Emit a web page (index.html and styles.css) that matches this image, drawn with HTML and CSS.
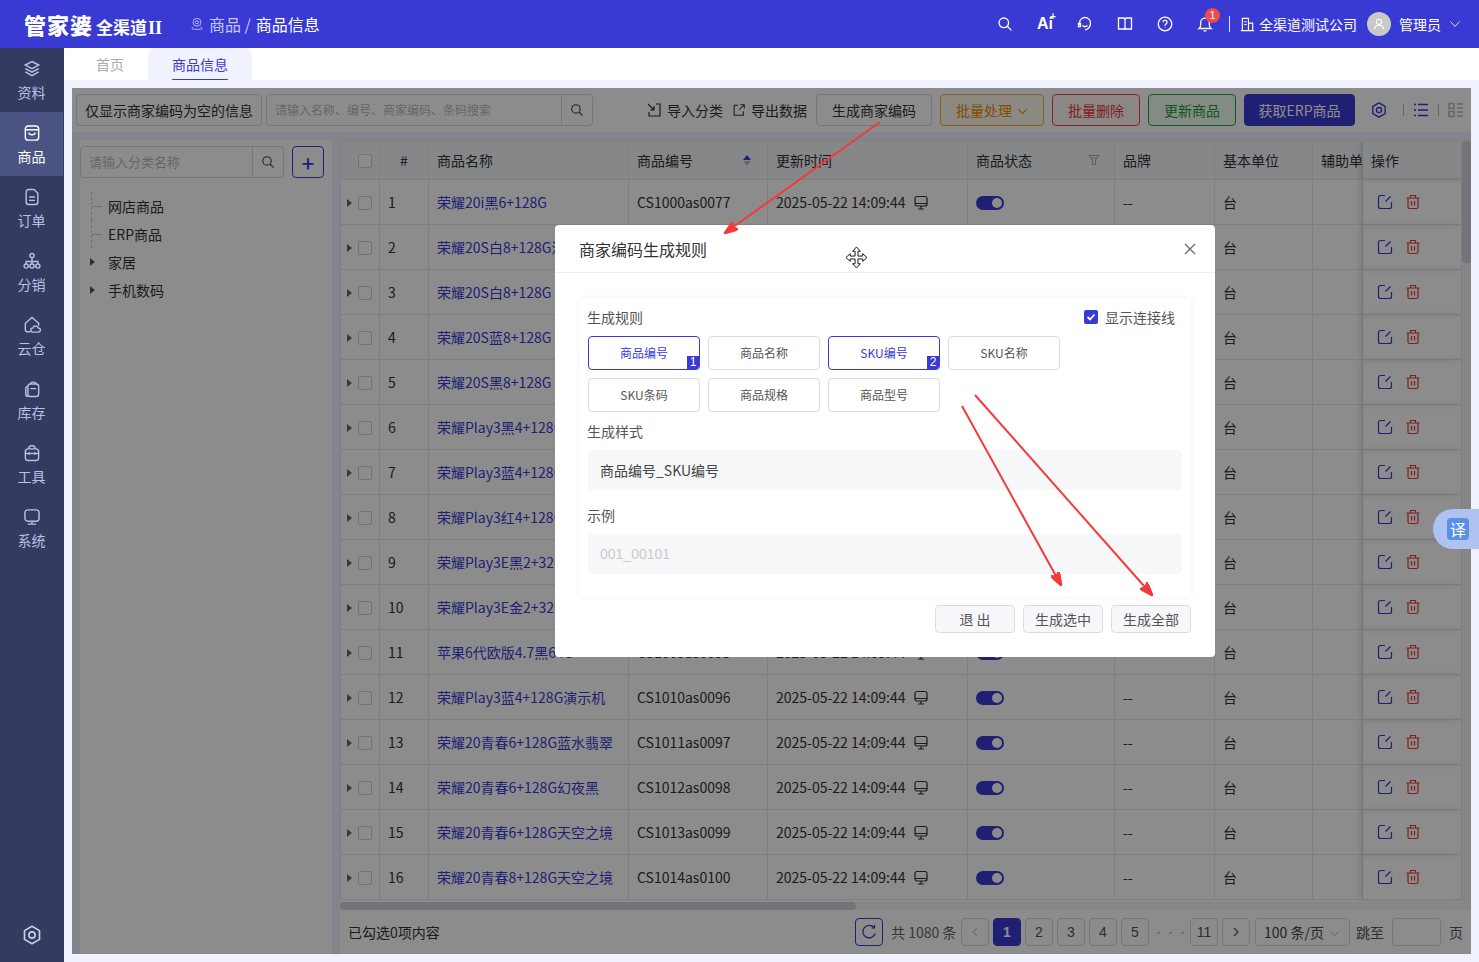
FILE: index.html
```html
<!DOCTYPE html>
<html lang="zh-CN">
<head>
    <meta charset="UTF-8">
    <title>商品信息</title>
    <link rel="stylesheet" href="styles.css">
</head>
<body>

<svg class="sprite" width="0" height="0">
    <symbol id="i-search" viewBox="0 0 16 16"><circle cx="6.8" cy="6.8" r="4.8"/><path d="M10.3 10.3 14.4 14.4"/></symbol>
    <symbol id="i-screen" viewBox="0 0 16 16"><rect x="2" y="1.5" width="12" height="9.5" rx="2"/><path d="M2 8.5h12M8 11v3M5 14h6"/></symbol>
    <symbol id="i-edit" viewBox="0 0 16 16"><path d="M8 1.5H3.500a2 2 0 0 0-2 2v9a2 2 0 0 0 2 2h9a2 2 0 0 0 2-2V8"/><path d="M13.500 2.500 8.500 7.500"/></symbol>
    <symbol id="i-trash" viewBox="0 0 16 16"><path d="M1.500 4h13M5.500 4V1.500h5V4M3 4v9a1.500 1.500 0 0 0 1.500 1.500h7A1.500 1.500 0 0 0 13 13V4M6.500 7v4.500M9.500 7v4.500"/></symbol>
    <symbol id="i-gear" viewBox="0 0 24 24"><path d="M12 2.500l8.200 4.750v9.500L12 21.500l-8.200-4.750v-9.500z" stroke-linejoin="round"/><circle cx="12" cy="12" r="3.400"/></symbol>
</svg>

<header class="topbar">
    <div class="logo"><b>管家婆</b><span class="logo-sub">全渠道</span><span class="logo-ver">II</span></div>
    <div class="crumb">
        <svg class="crumb-pin" viewBox="0 0 16 16"><circle cx="8" cy="6" r="4.500"/><circle cx="8" cy="6" r="1.800"/><path d="M4 11.500c-2 .6-2.500 2.500 0 2.500h8c2.500 0 2-1.900 0-2.500"/></svg>
        <span class="crumb-dim">商品 /</span> <span>商品信息</span>
    </div>
    <div class="top-right">
        <svg class="top-ico" viewBox="0 0 16 16"><use href="#i-search"/></svg>
        <span class="top-ai">Ai<i>+</i></span>
        <svg class="top-ico" viewBox="0 0 16 16"><path d="M2.500 9V7a5.500 5.500 0 0 1 11 0c0 4-2 6-5.500 7"/><path d="M1.500 7.500h2v3h-2zM5.500 9.500c1.500 1.500 3.500 1.500 5 0"/></svg>
        <svg class="top-ico" viewBox="0 0 16 16"><path d="M1.500 2h5c.9 0 1.500.5 1.500 1.500 0-1 .6-1.500 1.500-1.500h5v11h-5c-.9 0-1.500.3-1.500 1-.0-.7-.6-1-1.500-1h-5zM8 3.500V14"/></svg>
        <svg class="top-ico" viewBox="0 0 16 16"><circle cx="8" cy="8" r="6.800"/><path d="M6 6.200a2 2 0 1 1 3.200 1.600c-.8.6-1.200 1-1.200 1.900M8 11.400v.6"/></svg>
        <div class="bell">
            <svg class="top-ico" viewBox="0 0 16 16"><path d="M2 12.500h12c-1.200-1-1.700-2-1.700-4V6.500a4.300 4.300 0 0 0-8.600 0v2c0 2-.5 3-1.700 4zM6.500 14.800h3"/></svg>
            <span class="bell-num">1</span>
        </div>
        <span class="top-line"></span>
        <svg class="top-build" viewBox="0 0 16 16"><path d="M1 14.500h14M2.500 14.500V1.500h6.500v13M9 6.500h4.500v8M4.500 5h2.500M4.500 8h2.500"/></svg>
        <span class="top-company">全渠道测试公司</span>
        <span class="avatar"><svg viewBox="0 0 16 16"><circle cx="8" cy="5.500" r="3"/><path d="M3 14c0-3 2-4.500 5-4.500s5 1.500 5 4.500"/></svg></span>
        <span class="top-user">管理员</span>
        <svg class="top-chev" viewBox="0 0 12 12"><path d="M1.500 3.500 6 8.500l4.500-5"/></svg>
    </div>
</header>

<div class="layout">
    <nav class="side">
        <a class="side-item">
            <svg viewBox="0 0 24 24"><path d="M12 3l8 4.200-8 4.300-8-4.300zM4 11.500l8 4.300 8-4.300M4 15.500l8 4.500 8-4.500"/></svg>资料
        </a>
        <a class="side-item active">
            <svg viewBox="0 0 24 24"><rect x="4" y="3.500" width="16" height="17" rx="3.500"/><path d="M4 8h16M8 11.500c1 3.500 7 3.500 8 0"/></svg>商品
        </a>
        <a class="side-item">
            <svg viewBox="0 0 24 24"><path d="M14.500 3H8a3 3 0 0 0-3 3v12a3 3 0 0 0 3 3h8a3 3 0 0 0 3-3V7.500zM8.500 12h7M8.500 16h7"/></svg>订单
        </a>
        <a class="side-item">
            <svg viewBox="0 0 24 24"><circle cx="12" cy="5.500" r="2.500"/><circle cx="5" cy="18" r="2.500"/><circle cx="12" cy="18" r="2.500"/><circle cx="19" cy="18" r="2.500"/><path d="M12 8v7.500M5 15.500V12.500h14v3"/></svg>分销
        </a>
        <a class="side-item">
            <svg viewBox="0 0 24 24"><path d="M10 20H6a2 2 0 0 1-2-2V10l8-7 8 7v3"/><path d="M13 20.500a2.500 2.500 0 0 1 0-5 3.500 3.500 0 0 1 6.500 0 2.500 2.500 0 0 1 0 5z"/></svg>云仓
        </a>
        <a class="side-item">
            <svg viewBox="0 0 24 24"><rect x="7" y="6" width="13" height="15" rx="3"/><path d="M7 8.500A3 3 0 0 0 4.500 11v7c0 1.500 1.200 3 3 3M10 11.500h7M10 6c0-3 7-3 7 0"/></svg>库存
        </a>
        <a class="side-item">
            <svg viewBox="0 0 24 24"><rect x="4" y="7" width="16" height="14" rx="3.500"/><path d="M8 7c0-5 8-5 8 0M4 12.500h16M8.500 11v3M15.500 11v3"/></svg>工具
        </a>
        <a class="side-item">
            <svg viewBox="0 0 24 24"><rect x="3.500" y="3.500" width="17" height="13.500" rx="3.500"/><path d="M12 17v3.500M7 20.500h10"/></svg>系统
        </a>
        <svg class="side-gear" viewBox="0 0 24 24"><use href="#i-gear"/></svg>
    </nav>

    <div class="main">
        <div class="tabs">
            <a class="tab">首页</a>
            <a class="tab tab-on"><span>商品信息</span></a>
        </div>

        <div class="content">
            <div class="toolbar">
                <button class="btn btn-empty">仅显示商家编码为空的信息</button>
                <div class="search search-main">
                    <span class="search-text">请输入名称、编号、商家编码、条码搜索</span>
                    <span class="search-btn"><svg viewBox="0 0 16 16"><use href="#i-search"/></svg></span>
                </div>
                <div class="tool-right">
                    <a class="tool-link"><svg viewBox="0 0 16 16"><path d="M2 2l6 6M8 4v4H4M10 2h4v12H3v-4"/></svg>导入分类</a>
                    <a class="tool-link"><svg viewBox="0 0 16 16"><path d="M7 2.500H2.500v11.500h10.500V9.500M9.500 2h4.500v4.500M14 2 8 8"/></svg>导出数据</a>
                    <button class="btn btn-code">生成商家编码</button>
                    <button class="btn btn-orange">批量处理<svg viewBox="0 0 12 12"><path d="M1.500 3.500 6 8.500l4.500-5"/></svg></button>
                    <button class="btn btn-red">批量删除</button>
                    <button class="btn btn-green">更新商品</button>
                    <button class="btn btn-solid">获取ERP商品</button>
                    <svg class="tool-gear" viewBox="0 0 24 24"><use href="#i-gear"/></svg>
                    <span class="tool-line"></span>
                    <svg class="tool-view on" viewBox="0 0 16 16"><path d="M1 2.500h2M5 2.500h10M1 8h2M5 8h10M1 13.500h2M5 13.500h10"/></svg>
                    <span class="tool-line"></span>
                    <svg class="tool-view" viewBox="0 0 16 16"><path d="M1 1.500h5v5H1zM1 9.500h5v5H1zM9 2h6M9 6h6M9 10h6M9 14h6"/></svg>
                </div>
            </div>

            <div class="panes">
                <aside class="tree">
                    <div class="tree-top">
                        <div class="search search-tree">
                            <span class="search-text">请输入分类名称</span>
                            <span class="search-btn"><svg viewBox="0 0 16 16"><use href="#i-search"/></svg></span>
                        </div>
                        <button class="tree-add">+</button>
                    </div>
                    <ul class="tree-list">
                        <li class="leaf">网店商品</li>
                        <li class="leaf leaf-end">ERP商品</li>
                        <li class="branch">家居</li>
                        <li class="branch">手机数码</li>
                    </ul>
                </aside>

                <section class="grid">
                    <div class="grid-wrap">
                        <table class="goods">
                            <colgroup>
                                <col class="c-check"><col class="c-num"><col class="c-name"><col class="c-code"><col class="c-time">
                                <col class="c-state"><col class="c-brand"><col class="c-unit"><col class="c-sub"><col class="c-ops">
                            </colgroup>
                            <thead>
                                <tr>
                                    <th><span class="check head-check"></span></th>
                                    <th class="center">#</th>
                                    <th>商品名称</th>
                                    <th><div class="th-flex">商品编号<span class="sort"><i class="up"></i><i class="down"></i></span></div></th>
                                    <th>更新时间</th>
                                    <th><div class="th-flex">商品状态<svg class="filter" viewBox="0 0 12 12"><path d="M1 1.500h10L7.500 6v4.500h-3V6zM3 4h6"/></svg></div></th>
                                    <th>品牌</th>
                                    <th>基本单位</th>
                                    <th>辅助单位</th>
                                    <th class="ops">操作</th>
                                </tr>
                            </thead>
                            <tbody>
                                <tr><td><i class="expand"></i><span class="check"></span></td><td>1</td><td><a>荣耀20i黑6+128G</a></td><td>CS1000as0077</td><td>2025-05-22 14:09:44<svg class="screen"><use href="#i-screen"/></svg></td><td><span class="toggle"></span></td><td>--</td><td>台</td><td></td><td class="ops"><svg class="op-edit"><use href="#i-edit"/></svg><svg class="op-del"><use href="#i-trash"/></svg></td></tr>
                                <tr><td><i class="expand"></i><span class="check"></span></td><td>2</td><td><a>荣耀20S白8+128G渐变</a></td><td>CS1001as0078</td><td>2025-05-22 14:09:44<svg class="screen"><use href="#i-screen"/></svg></td><td><span class="toggle"></span></td><td>--</td><td>台</td><td></td><td class="ops"><svg class="op-edit"><use href="#i-edit"/></svg><svg class="op-del"><use href="#i-trash"/></svg></td></tr>
                                <tr><td><i class="expand"></i><span class="check"></span></td><td>3</td><td><a>荣耀20S白8+128G</a></td><td>CS1002as0079</td><td>2025-05-22 14:09:44<svg class="screen"><use href="#i-screen"/></svg></td><td><span class="toggle"></span></td><td>--</td><td>台</td><td></td><td class="ops"><svg class="op-edit"><use href="#i-edit"/></svg><svg class="op-del"><use href="#i-trash"/></svg></td></tr>
                                <tr><td><i class="expand"></i><span class="check"></span></td><td>4</td><td><a>荣耀20S蓝8+128G</a></td><td>CS1003as0080</td><td>2025-05-22 14:09:44<svg class="screen"><use href="#i-screen"/></svg></td><td><span class="toggle"></span></td><td>--</td><td>台</td><td></td><td class="ops"><svg class="op-edit"><use href="#i-edit"/></svg><svg class="op-del"><use href="#i-trash"/></svg></td></tr>
                                <tr><td><i class="expand"></i><span class="check"></span></td><td>5</td><td><a>荣耀20S黑8+128G</a></td><td>CS1004as0081</td><td>2025-05-22 14:09:44<svg class="screen"><use href="#i-screen"/></svg></td><td><span class="toggle"></span></td><td>--</td><td>台</td><td></td><td class="ops"><svg class="op-edit"><use href="#i-edit"/></svg><svg class="op-del"><use href="#i-trash"/></svg></td></tr>
                                <tr><td><i class="expand"></i><span class="check"></span></td><td>6</td><td><a>荣耀Play3黑4+128G</a></td><td>CS1005as0082</td><td>2025-05-22 14:09:44<svg class="screen"><use href="#i-screen"/></svg></td><td><span class="toggle"></span></td><td>--</td><td>台</td><td></td><td class="ops"><svg class="op-edit"><use href="#i-edit"/></svg><svg class="op-del"><use href="#i-trash"/></svg></td></tr>
                                <tr><td><i class="expand"></i><span class="check"></span></td><td>7</td><td><a>荣耀Play3蓝4+128G</a></td><td>CS1006as0083</td><td>2025-05-22 14:09:44<svg class="screen"><use href="#i-screen"/></svg></td><td><span class="toggle"></span></td><td>--</td><td>台</td><td></td><td class="ops"><svg class="op-edit"><use href="#i-edit"/></svg><svg class="op-del"><use href="#i-trash"/></svg></td></tr>
                                <tr><td><i class="expand"></i><span class="check"></span></td><td>8</td><td><a>荣耀Play3红4+128G</a></td><td>CS1007as0084</td><td>2025-05-22 14:09:44<svg class="screen"><use href="#i-screen"/></svg></td><td><span class="toggle"></span></td><td>--</td><td>台</td><td></td><td class="ops"><svg class="op-edit"><use href="#i-edit"/></svg><svg class="op-del"><use href="#i-trash"/></svg></td></tr>
                                <tr><td><i class="expand"></i><span class="check"></span></td><td>9</td><td><a>荣耀Play3E黑2+32G</a></td><td>CS1008as0085</td><td>2025-05-22 14:09:44<svg class="screen"><use href="#i-screen"/></svg></td><td><span class="toggle"></span></td><td>--</td><td>台</td><td></td><td class="ops"><svg class="op-edit"><use href="#i-edit"/></svg><svg class="op-del"><use href="#i-trash"/></svg></td></tr>
                                <tr><td><i class="expand"></i><span class="check"></span></td><td>10</td><td><a>荣耀Play3E金2+32G</a></td><td>CS1009as0086</td><td>2025-05-22 14:09:44<svg class="screen"><use href="#i-screen"/></svg></td><td><span class="toggle"></span></td><td>--</td><td>台</td><td></td><td class="ops"><svg class="op-edit"><use href="#i-edit"/></svg><svg class="op-del"><use href="#i-trash"/></svg></td></tr>
                                <tr><td><i class="expand"></i><span class="check"></span></td><td>11</td><td><a>苹果6代欧版4.7黑64G</a></td><td>CS1009as0095</td><td>2025-05-22 14:09:44<svg class="screen"><use href="#i-screen"/></svg></td><td><span class="toggle"></span></td><td>--</td><td>台</td><td></td><td class="ops"><svg class="op-edit"><use href="#i-edit"/></svg><svg class="op-del"><use href="#i-trash"/></svg></td></tr>
                                <tr><td><i class="expand"></i><span class="check"></span></td><td>12</td><td><a>荣耀Play3蓝4+128G演示机</a></td><td>CS1010as0096</td><td>2025-05-22 14:09:44<svg class="screen"><use href="#i-screen"/></svg></td><td><span class="toggle"></span></td><td>--</td><td>台</td><td></td><td class="ops"><svg class="op-edit"><use href="#i-edit"/></svg><svg class="op-del"><use href="#i-trash"/></svg></td></tr>
                                <tr><td><i class="expand"></i><span class="check"></span></td><td>13</td><td><a>荣耀20青春6+128G蓝水翡翠</a></td><td>CS1011as0097</td><td>2025-05-22 14:09:44<svg class="screen"><use href="#i-screen"/></svg></td><td><span class="toggle"></span></td><td>--</td><td>台</td><td></td><td class="ops"><svg class="op-edit"><use href="#i-edit"/></svg><svg class="op-del"><use href="#i-trash"/></svg></td></tr>
                                <tr><td><i class="expand"></i><span class="check"></span></td><td>14</td><td><a>荣耀20青春6+128G幻夜黑</a></td><td>CS1012as0098</td><td>2025-05-22 14:09:44<svg class="screen"><use href="#i-screen"/></svg></td><td><span class="toggle"></span></td><td>--</td><td>台</td><td></td><td class="ops"><svg class="op-edit"><use href="#i-edit"/></svg><svg class="op-del"><use href="#i-trash"/></svg></td></tr>
                                <tr><td><i class="expand"></i><span class="check"></span></td><td>15</td><td><a>荣耀20青春6+128G天空之境</a></td><td>CS1013as0099</td><td>2025-05-22 14:09:44<svg class="screen"><use href="#i-screen"/></svg></td><td><span class="toggle"></span></td><td>--</td><td>台</td><td></td><td class="ops"><svg class="op-edit"><use href="#i-edit"/></svg><svg class="op-del"><use href="#i-trash"/></svg></td></tr>
                                <tr><td><i class="expand"></i><span class="check"></span></td><td>16</td><td><a>荣耀20青春8+128G天空之境</a></td><td>CS1014as0100</td><td>2025-05-22 14:09:44<svg class="screen"><use href="#i-screen"/></svg></td><td><span class="toggle"></span></td><td>--</td><td>台</td><td></td><td class="ops"><svg class="op-edit"><use href="#i-edit"/></svg><svg class="op-del"><use href="#i-trash"/></svg></td></tr>
                            </tbody>
                        </table>
                        <div class="vbar"><span></span></div>
                        <div class="hbar"><span></span></div>
                    </div>
                    <div class="pager">
                        <span class="pick-info">已勾选0项内容</span>
                        <div class="pager-right">
                            <button class="page page-reload"><svg viewBox="0 0 16 16"><path d="M13 3.500A6.300 6.300 0 1 0 14.200 9.500M13.500 1v3h-3"/></svg></button>
                            <span class="page-total">共 1080 条</span>
                            <button class="page page-off"><svg viewBox="0 0 12 12"><path d="M8 2 4 6l4 4"/></svg></button>
                            <button class="page page-on">1</button>
                            <button class="page">2</button>
                            <button class="page">3</button>
                            <button class="page">4</button>
                            <button class="page">5</button>
                            <span class="page-more">•••</span>
                            <button class="page">11</button>
                            <button class="page"><svg viewBox="0 0 12 12"><path d="M4 2l4 4-4 4"/></svg></button>
                            <div class="page-size">100 条/页<svg viewBox="0 0 12 12"><path d="M1.500 3.500 6 8.500l4.500-5"/></svg></div>
                            <span class="page-jump">跳至</span>
                            <span class="page-input"></span>
                            <span class="page-unit">页</span>
                        </div>
                    </div>
                </section>
            </div>

            <div class="mask"></div>

            <div class="modal">
                <div class="modal-head">
                    <span>商家编码生成规则</span>
                    <svg class="modal-close" viewBox="0 0 12 12"><path d="M1 1l10 10M11 1 1 11"/></svg>
                </div>
                <div class="modal-body">
                    <div class="rule-card">
                        <div class="rule-top">
                            <label class="rule-label">生成规则</label>
                            <span class="line-opt"><span class="tick"><svg viewBox="0 0 12 12"><path d="M2.500 6 5 8.500l4.500-5"/></svg></span>显示连接线</span>
                        </div>
                        <div class="chips">
                            <span class="chip chip-on">商品编号<b>1</b></span>
                            <span class="chip">商品名称</span>
                            <span class="chip chip-on">SKU编号<b>2</b></span>
                            <span class="chip">SKU名称</span>
                            <span class="chip">SKU条码</span>
                            <span class="chip">商品规格</span>
                            <span class="chip">商品型号</span>
                        </div>
                        <label class="rule-label label-style">生成样式</label>
                        <div class="rule-input">商品编号_SKU编号</div>
                        <label class="rule-label label-demo">示例</label>
                        <div class="rule-input rule-demo">001_00101</div>
                    </div>
                    <div class="modal-foot">
                        <button class="foot-btn">退 出</button>
                        <button class="foot-btn">生成选中</button>
                        <button class="foot-btn">生成全部</button>
                    </div>
                </div>
            </div>
        </div>
    </div>
</div>

<div class="translate"><span>译</span></div>

<!-- 标注箭头 -->
<svg class="marks" viewBox="0 0 1479 962">
    <defs>
        <marker id="head" markerUnits="userSpaceOnUse" markerWidth="14" markerHeight="10" refX="13" refY="5" orient="auto"><path d="M0 0 14 5 0 10 3 5z" fill="#f43a3a"/></marker>
    </defs>
    <path d="M880 122 725 233" marker-end="url(#head)"/>
    <path d="M962 406 1061 585" marker-end="url(#head)"/>
    <path d="M975 395 1152 595" marker-end="url(#head)"/>
</svg>

<svg class="move-cursor" viewBox="0 0 24 24">
    <path d="M12 1l4 4.500h-2.500v5h5V8l4.500 4-4.500 4v-2.500h-5v5H16L12 23l-4-4.500h2.500v-5h-5V16L1 12l4.500-4v2.500h5v-5H8z"/>
</svg>

</body>
</html>
```

FILE: styles.css
```css
* { box-sizing: border-box; }
html, body { height: 100%; }
body { margin: 0; height: 100vh; overflow: hidden; display: flex; flex-direction: column; background: #f0f2ff; color: #333; font-family: "Noto Sans CJK SC", "Liberation Sans", sans-serif; font-size: 14px; }
button { font-family: inherit; font-size: 14px; cursor: pointer; }
.sprite { position: absolute; }
symbol, svg { fill: none; stroke: currentColor; }

/* 顶部 */
.topbar { height: 48px; flex: none; background: #3939d3; color: #fff; display: flex; align-items: center; padding-left: 24px; }
.logo { width: 158px; display: flex; align-items: baseline; white-space: nowrap; font-weight: 700; }
.logo b { font-size: 22px; letter-spacing: 1px; line-height: 30px; }
.logo-sub { font-size: 17px; margin-left: 3px; }
.logo-ver { font-family: "Liberation Serif", serif; font-size: 18px; margin-left: 1px; }
.logo { margin-right: 8px; }
.crumb { display: flex; align-items: center; gap: 5px; font-size: 16px; }
.crumb-pin { width: 14px; height: 14px; color: #c4c8f7; stroke-width: 1; }
.crumb-dim { color: #c4c8f7; }
.top-right { margin-left: auto; display: flex; align-items: center; padding-right: 18px; }
.top-ico { width: 16px; height: 16px; stroke-width: 1.300; margin-left: 24px; }
.top-right > .top-ico:first-child { margin-left: 0; }
.top-ai { width: 16px; margin-left: 24px; font: 700 16px "Liberation Sans", sans-serif; position: relative; }
.top-ai i { position: absolute; font-style: normal; font-size: 10px; top: -4px; left: 13px; }
.bell { position: relative; display: flex; }
.bell-num { position: absolute; left: 32px; top: -8px; width: 15px; height: 15px; border-radius: 50%; background: #f4484c; font: 11px/15px "Liberation Sans", sans-serif; text-align: center; }
.top-line { width: 1px; height: 16px; background: #dfe0fa; margin-left: 16px; }
.top-build { width: 15px; height: 15px; margin-left: 10px; stroke-width: 1.200; }
.top-company { margin-left: 4px; }
.avatar { width: 24px; height: 24px; border-radius: 50%; background: #c9c9c9; margin-left: 10px; display: flex; align-items: center; justify-content: center; color: #fff; }
.avatar svg { width: 14px; height: 14px; stroke-width: 1.200; }
.top-user { margin-left: 8px; }
.top-chev { width: 12px; height: 12px; margin-left: 8px; stroke-width: 1; color: #d8daf8; }

.layout { flex: 1; display: flex; min-height: 0; }

/* 左侧菜单 */
.side { width: 64px; flex: none; background: #353b60; color: #b9bfe8; display: flex; flex-direction: column; }
.side-item { height: 64px; width: 63px; padding-top: 11px; display: flex; flex-direction: column; align-items: center; gap: 3px; font-size: 14px; line-height: 20px; }
.side-item svg { width: 20px; height: 20px; stroke-width: 1.700; }
.side-item.active { background: #4a5382; color: #fff; }
.side-gear { width: 22px; height: 22px; margin: auto 0 16px 21px; stroke-width: 1.800; color: #c9cdf0; }

.main { flex: 1; min-width: 0; display: flex; flex-direction: column; }

/* 页签 */
.tabs { height: 32px; flex: none; background: #fff; display: flex; padding-left: 8px; }
.tab { width: 76px; text-align: center; line-height: 32px; color: #aaa; }
.tab-on { width: 104px; background: #f0f2ff; border-radius: 8px 8px 0 0; color: #3939d3; }
.tab-on span { display: inline-block; height: 32px; border-bottom: 1px solid #3939d3; }

/* 内容区 */
.content { flex: 1; min-height: 0; margin: 8px; position: relative; display: flex; flex-direction: column; }
.toolbar { height: 44px; flex: none; background: #fff; display: flex; align-items: center; padding: 0 7px 0 4px; }
.btn { height: 32px; background: #fff; border: 1px solid #d9d9d9; border-radius: 4px; color: #333; padding: 0; }
.btn-empty { width: 186px; }
.search { display: flex; height: 32px; border: 1px solid #d9d9d9; border-radius: 4px; background: #fff; }
.search-main { width: 327px; margin-left: 4px; }
.search-text { flex: 1; padding-left: 8px; font-size: 12px; line-height: 30px; color: #bbb; overflow: hidden; white-space: nowrap; }
.search-btn { width: 31px; flex: none; border-left: 1px solid #d9d9d9; display: flex; align-items: center; justify-content: center; }
.search-btn svg { width: 14px; height: 14px; stroke-width: 1.300; color: #444; }
.tool-right { margin-left: auto; display: flex; align-items: center; }
.tool-link { display: flex; align-items: center; gap: 5px; margin-right: 9px; }
.tool-link svg { width: 16px; height: 16px; stroke-width: 1.200; }
.tool-link + .tool-link svg { width: 14px; height: 14px; }
.btn-code { width: 116px; margin-right: 8px; }
.btn-orange { width: 104px; margin-right: 8px; border-color: #ffa940; color: #f08c00; background: #fff9ef; }
.btn-orange svg { width: 11px; height: 11px; margin-left: 5px; stroke-width: 1.200; vertical-align: -1px; }
.btn-red { width: 88px; margin-right: 8px; border-color: #f04848; color: #e53935; background: #fff5f5; }
.btn-green { width: 88px; margin-right: 8px; border-color: #1fa33a; color: #1a9e36; background: #f1fbf2; }
.btn-solid { width: 111px; background: #3939d3; border-color: #3939d3; color: #fff; }
.tool-gear { width: 18px; height: 18px; margin-left: 15px; color: #3939d3; stroke-width: 1.800; }
.tool-line { width: 1px; height: 12px; background: #bbb; margin: 0 9px; }
.tool-gear + .tool-line { margin-left: 15px; }
.tool-view { width: 16px; height: 16px; stroke-width: 1.500; color: #bbb; }
.tool-view.on { color: #3939d3; }

.panes { flex: 1; min-height: 0; display: flex; gap: 8px; padding: 8px 0 0 8px; }

/* 分类树 */
.tree { width: 252px; flex: none; background: #fff; padding-top: 6px; }
.tree-top { display: flex; gap: 8px; }
.search-tree { width: 204px; }
.search-tree .search-text { font-size: 13px; }
.tree-add { width: 32px; height: 32px; padding: 0; background: #fff; border: 1px solid #3939d3; border-radius: 4px; color: #3939d3; font-size: 22px; line-height: 26px; font-weight: 500; }
.tree-list { list-style: none; margin: 14px 0 0; padding: 0; }
.tree-list li { height: 28px; line-height: 28px; padding-left: 28px; position: relative; }
.leaf::before { content: ""; position: absolute; left: 11px; top: 0; bottom: 0; border-left: 1px dashed #ccc; }
.leaf::after { content: ""; position: absolute; left: 12px; top: 14px; width: 10px; border-top: 1px dashed #ccc; }
.branch::before { content: ""; position: absolute; left: 10px; top: 10px; border: 4px solid transparent; border-left: 5px solid #555; }

/* 表格 */
.grid { flex: 1; min-width: 0; background: #fff; display: flex; flex-direction: column; }
.grid-wrap { flex: 1; min-height: 0; position: relative; overflow: hidden; border-top: 1px solid #e8e8e8; }
.goods { table-layout: fixed; width: 1122px; border-collapse: separate; border-spacing: 0; }
.c-check { width: 40px; } .c-num { width: 49px; } .c-name { width: 200px; } .c-code { width: 139px; } .c-time { width: 200px; }
.c-state { width: 147px; } .c-brand { width: 100px; } .c-unit { width: 98px; } .c-sub { width: 50px; } .c-ops { width: 99px; }
.goods th, .goods td { padding: 0 8px; text-align: left; font-weight: 400; white-space: nowrap; overflow: hidden; border-right: 1px solid #e8e8e8; border-bottom: 1px solid #e8e8e8; }
.goods th { height: 39px; background: #f5f6fa; }
.goods td { height: 45px; }
.goods th:first-child { padding: 0 0 0 17px; border-left: 1px solid #e8e8e8; }
.goods td:first-child { padding: 0 0 0 6px; border-left: 1px solid #e8e8e8; }
.goods th.center { text-align: center; }
.goods a { color: #3939d3; }
.goods .ops { overflow: visible; box-shadow: -3px 0 6px rgba(0, 0, 0, .12); }
.goods td.ops { padding-left: 14px; font-size: 0; }
.check { display: inline-block; width: 14px; height: 14px; border: 1px solid #d0d0d0; border-radius: 2px; background: #fff; vertical-align: -2px; }
.expand { display: inline-block; border: 4px solid transparent; border-left: 5px solid #666; border-right-width: 0; margin-right: 6px; vertical-align: 1px; }
.th-flex { display: flex; justify-content: space-between; align-items: center; padding-right: 0; }
.sort { display: flex; flex-direction: column; gap: 1px; margin-right: 0; }
.sort i { border: 4px solid transparent; display: block; }
.sort .up { border-top: 0; border-bottom: 5px solid #3939d3; }
.sort .down { border-bottom: 0; border-top: 5px solid #bbb; }
.th-flex .sort { margin-right: 8px; }
.filter { width: 12px; height: 12px; stroke-width: 1; color: #aaa; margin-right: 6px; }
.screen { width: 16px; height: 16px; margin-left: 8px; vertical-align: -3px; stroke-width: 1.200; }
.toggle { display: block; width: 28px; height: 14px; margin-top: 2px; border-radius: 7px; background: #3939d3; position: relative; }
.toggle::after { content: ""; position: absolute; right: 2px; top: 2px; width: 10px; height: 10px; border-radius: 50%; background: #fff; }
.op-edit, .op-del { width: 16px; height: 16px; stroke-width: 1.200; }
.op-edit { color: #3939d3; margin-right: 12px; }
.op-del { color: #e53935; }
.vbar { position: absolute; right: 0; top: 0; bottom: 0; width: 9px; background: #f5f5f5; }
.vbar span { display: block; height: 122px; border-radius: 4px; background: #d0d3da; }
.hbar { position: absolute; left: 0; right: 9px; bottom: 0; height: 8px; background: #f5f5f5; }
.hbar span { display: block; width: 516px; height: 8px; border-radius: 4px; background: #d0d3da; }

/* 分页 */
.pager { height: 44px; flex: none; display: flex; align-items: center; padding: 0 8px; }
.pager-right { margin-left: auto; display: flex; align-items: center; gap: 4px; }
.page { width: 28px; height: 28px; padding: 0; background: #fff; border: 1px solid #d9d9d9; border-radius: 4px; color: #555; font-family: "Liberation Sans", sans-serif; display: flex; align-items: center; justify-content: center; }
.page svg { width: 12px; height: 12px; stroke-width: 1.200; }
.page-reload { border-color: #3939d3; color: #3939d3; margin-right: 4px; }
.page-reload svg { width: 16px; height: 16px; }
.page-total { color: #666; margin-right: 0; width: 66px; white-space: nowrap; }
.page-off { color: #ccc; }
.page-on { background: #3939d3; border-color: #3939d3; color: #fff; font-weight: 700; }
.page-more { width: 33px; text-align: center; color: #bbb; font-size: 11px; letter-spacing: 1px; }
.page-size { width: 95px; height: 28px; margin-left: 1px; border: 1px solid #d9d9d9; border-radius: 4px; padding-left: 8px; line-height: 26px; white-space: nowrap; color: #444; }
.page-size svg { width: 11px; height: 11px; margin-left: 5px; color: #bbb; stroke-width: 1; vertical-align: -1px; }
.page-jump { margin-left: 2px; color: #555; }
.page-input { width: 49px; height: 28px; margin-left: 4px; border: 1px solid #d9d9d9; border-radius: 4px; }
.page-unit { margin-left: 4px; color: #555; }

/* 弹窗遮罩 */
.mask { position: absolute; inset: 0; background: rgba(0, 0, 0, .45); }
.modal { position: absolute; left: 483px; top: 137px; width: 660px; height: 432px; background: #fff; border-radius: 4px; color: #444; }
.modal-head { height: 48px; border-bottom: 1px solid #eceef2; padding: 0 19px 0 24px; display: flex; align-items: center; justify-content: space-between; font-size: 16px; color: #333; }
.modal-close { width: 12px; height: 12px; color: #666; stroke-width: 1.200; }
.modal-body { padding: 25px 24px 0; }
.rule-card { height: 299px; padding: 8px 8px 0 9px; border-radius: 4px; box-shadow: 0 0 4px rgba(60, 60, 120, .1); }
.rule-top { display: flex; justify-content: space-between; align-items: center; height: 22px; padding-right: 8px; margin-bottom: 8px; }
.rule-label { display: block; line-height: 22px; color: #555; margin-left: -1px; }
.line-opt { display: flex; align-items: center; gap: 7px; color: #555; }
.tick { width: 14px; height: 14px; border-radius: 2px; background: #3939d3; color: #fff; display: flex; align-items: center; justify-content: center; }
.tick svg { width: 12px; height: 12px; stroke-width: 1.800; }
.chips { display: grid; grid-template-columns: repeat(4, 112px); grid-auto-rows: 34px; gap: 8px; }
.chip { position: relative; border: 1px solid #dcdde3; border-radius: 4px; font-size: 12px; line-height: 32px; text-align: center; color: #555; overflow: hidden; }
.chip-on { border-color: #3939d3; color: #3939d3; }
.chip b { position: absolute; right: 0; bottom: 0; width: 12px; height: 13px; background: #3939d3; color: #fff; font: 12px/13px "Liberation Sans", sans-serif; }
.label-style { margin-top: 8px; }
.label-demo { margin-top: 14px; }
.rule-input { width: 594px; height: 40px; margin-top: 8px; border-radius: 4px; background: #f6f7f9; padding-left: 12px; line-height: 40px; color: #444; }
.rule-demo { color: #c9cad0; font-family: "Liberation Sans", sans-serif; }
.modal-foot { display: flex; justify-content: flex-end; gap: 8px; margin-top: 8px; }
.foot-btn { width: 80px; height: 28px; padding: 0; border: 1px solid #dcdde3; border-radius: 4px; background: #f6f7fa; color: #555; }

/* 翻译浮标 */
.translate { position: absolute; right: 0; top: 509px; width: 46px; height: 40px; border-radius: 20px 0 0 20px; background: #afc3f2; padding: 9px 0 0 14px; }
.translate span { display: block; width: 22px; height: 22px; border-radius: 4px; background: #5a8fe6; color: #fff; font-size: 16px; line-height: 22px; text-align: center; }

.marks { position: absolute; left: 0; top: 0; width: 1479px; height: 962px; pointer-events: none; }
.marks path { stroke: #f43a3a; stroke-width: 2; }
.move-cursor { position: absolute; left: 845px; top: 246px; width: 23px; height: 23px; fill: #fff; stroke: #111; stroke-width: 1; stroke-linejoin: round; }
```
